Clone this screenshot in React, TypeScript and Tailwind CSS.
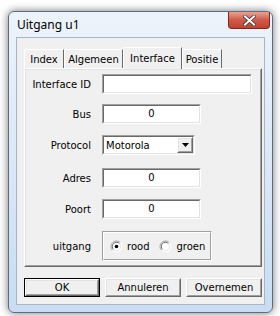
import React from "react";

const raised =
  "border border-t-white border-l-white border-r-[#696969] border-b-[#696969]";
const sunkenOuter =
  "border border-t-[#a0a0a0] border-l-[#a0a0a0] border-r-white border-b-white";
const sunkenInner =
  "border border-t-[#696969] border-l-[#696969] border-r-[#e3e3e3] border-b-[#e3e3e3]";

function Field({ w, value, center = true }: { w: string; value?: string; center?: boolean }) {
  return (
    <div className={`${sunkenOuter} ${w} h-[20px]`}>
      <div className={`${sunkenInner} h-full bg-white flex items-center ${center ? "justify-center" : "pl-[2px]"}`}>
        <span className="leading-none">{value}</span>
      </div>
    </div>
  );
}

function Row({ label, mt, children }: { label: string; mt: string; children: React.ReactNode }) {
  return (
    <div className={`flex items-center ${mt}`}>
      <div className="w-[65px] text-right pr-0">{label}</div>
      <div className="ml-[11px]">{children}</div>
    </div>
  );
}

function Button({ label, def = false }: { label: string; def?: boolean }) {
  return (
    <div className={`w-[76px] h-[19px] ${def ? "border border-[#000]" : ""}`}>
      <div className={`${raised} h-full`}>
        <div className="border border-t-[#e3e3e3] border-l-[#e3e3e3] border-r-[#a0a0a0] border-b-[#a0a0a0] h-full flex items-center justify-center">
          {label}
        </div>
      </div>
    </div>
  );
}

function Radio({ checked }: { checked?: boolean }) {
  return (
    <svg width="13" height="13" viewBox="0 0 13 13">
      <circle cx="6.5" cy="6.5" r="5.5" fill="#fff" />
      <path d="M2.6 10.4 A5.5 5.5 0 0 1 10.4 2.6" stroke="#a0a0a0" fill="none" />
      <path d="M10.4 2.6 A5.5 5.5 0 0 1 2.6 10.4" stroke="#fff" fill="none" />
      <path d="M3.5 9.5 A4.2 4.2 0 0 1 9.5 3.5" stroke="#696969" fill="none" />
      <path d="M9.5 3.5 A4.2 4.2 0 0 1 3.5 9.5" stroke="#e3e3e3" fill="none" />
      {checked && <circle cx="6.5" cy="6.5" r="1.8" fill="#000" />}
    </svg>
  );
}

function Tab({ label, w }: { label: string; w: string }) {
  return (
    <div className={`${w} h-[19px] border border-b-0 border-t-white border-l-white border-r-[#696969] flex items-center justify-center`}>
      {label}
    </div>
  );
}

export default function App() {
  return (
    <div
      className="w-[280px] h-[316px] bg-white overflow-hidden pt-[11px] pl-[8px] text-[10px] text-black"
      style={{ fontFamily: '"DejaVu Sans", sans-serif' }}
    >
      <div className="w-[265px] h-[302px] rounded-[6px] border border-[#5b6b80] shadow-[0_0_9px_rgba(0,0,0,0.55)] bg-gradient-to-b from-[#edf3fa] to-[#c9dcf2] flex flex-col">
        {/* Title bar */}
        <div className="h-[25px] flex items-start justify-between pl-[8px] pr-[2px]">
          <div
            className="mt-[6px] text-[12px] leading-[14px] text-black"
            style={{ fontFamily: '"Noto Sans", "Open Sans", sans-serif' }}
          >
            Uitgang u1
          </div>
          <div className="w-[42px] h-[17px] rounded-b-[4px] border border-t-0 border-[#7a2a22] bg-gradient-to-b from-[#e8a193] via-[#d1594a] to-[#c3412f] flex items-center justify-center">
            <svg width="13" height="11" viewBox="0 0 13 11">
              <path d="M2 1.5 L11 9.5 M11 1.5 L2 9.5" stroke="#3b3b3b" strokeWidth="3.6" strokeLinecap="square" />
              <path d="M2 1.5 L11 9.5 M11 1.5 L2 9.5" stroke="#ffffff" strokeWidth="2" strokeLinecap="square" />
            </svg>
          </div>
        </div>
        {/* Client area */}
        <div className="mx-[7px] mb-[7px] flex-1 border border-[#a6b7cb] bg-[#f0f0f0] flex flex-col pl-[7px] pr-[2px]">
          {/* Tabs */}
          <div className="flex items-end mt-[7px] h-[23px]">
            <Tab label="Index" w="w-[40px]" />
            <Tab label="Algemeen" w="w-[59px]" />
            <div className="w-[59px] h-[22px] -mb-[1px] z-10 relative bg-[#f0f0f0] border border-b-0 border-t-white border-l-white border-r-[#696969] flex items-start justify-center pt-[3px]">
              Interface
            </div>
            <Tab label="Positie" w="w-[40px]" />
          </div>
          {/* Panel */}
          <div className={`${raised} w-[238px] h-[199px]`}>
            <div className="border border-t-[#e3e3e3] border-l-[#e3e3e3] border-r-[#a0a0a0] border-b-[#a0a0a0] h-full flex flex-col">
              <Row label="Interface ID" mt="mt-[4px]">
                <Field w="w-[150px]" />
              </Row>
              <Row label="Bus" mt="mt-[10px]">
                <Field w="w-[99px]" value="0" />
              </Row>
              <Row label="Protocol" mt="mt-[11px]">
                <div className={`${sunkenOuter} w-[93px] h-[20px]`}>
                  <div className={`${sunkenInner} h-full bg-white flex items-center justify-between`}>
                    <span className="pl-[2px]">Motorola</span>
                    <div className={`${raised} w-[16px] h-full`}>
                      <div className="border border-t-[#e3e3e3] border-l-[#e3e3e3] border-r-[#a0a0a0] border-b-[#a0a0a0] h-full bg-[#f0f0f0] flex items-center justify-center">
                        <svg width="7" height="4" viewBox="0 0 7 4">
                          <path d="M0 0 H7 L3.5 4 Z" fill="#000" />
                        </svg>
                      </div>
                    </div>
                  </div>
                </div>
              </Row>
              <Row label="Adres" mt="mt-[13px]">
                <Field w="w-[99px]" value="0" />
              </Row>
              <Row label="Poort" mt="mt-[11px]">
                <Field w="w-[99px]" value="0" />
              </Row>
              <Row label="uitgang" mt="mt-[12px]">
                <div className="w-[110px] h-[30px] border border-t-[#a0a0a0] border-l-[#a0a0a0] border-r-white border-b-white">
                  <div className="h-full border border-t-white border-l-white border-r-[#a0a0a0] border-b-[#a0a0a0] flex items-center pl-[6px]">
                    <Radio checked />
                    <span className="ml-[4px]">rood</span>
                    <span className="ml-[10px] flex">
                      <Radio />
                    </span>
                    <span className="ml-[4px]">groen</span>
                  </div>
                </div>
              </Row>
            </div>
          </div>
          {/* Buttons */}
          <div className="flex gap-[5px] mt-[11px]">
            <Button label="OK" def />
            <Button label="Annuleren" />
            <Button label="Overnemen" />
          </div>
        </div>
      </div>
    </div>
  );
}
